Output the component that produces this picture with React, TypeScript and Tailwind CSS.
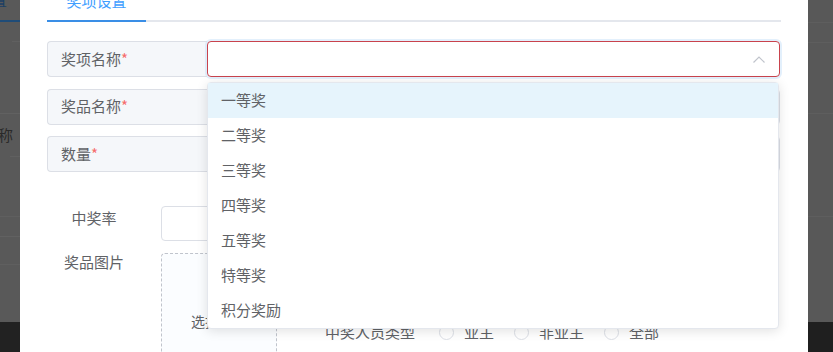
import React from "react";

const items = ["一等奖", "二等奖", "三等奖", "四等奖", "五等奖", "特等奖", "积分奖励"];

function LabeledInput({ label, active }: { label: string; active?: boolean }) {
  return (
    <div className="flex h-[36px] w-[733px]">
      <div className="flex w-[160px] shrink-0 items-center rounded-l-[4px] border border-r-0 border-[#dcdfe6] bg-[#f5f7fa] pl-[13px] text-[15px] text-[#606266]">
        {label}
        <span className="text-[#f56c6c]">*</span>
      </div>
      {active ? (
        <div className="relative flex-1 rounded-[4px] border border-[#c9434d] bg-white shadow-[0_0_0_2px_rgba(200,225,250,0.5)]">
          <svg className="absolute right-[13px] top-[13px]" width="14" height="9" viewBox="0 0 14 9" fill="none">
            <path d="M1.5 7.5 L7 2 L12.5 7.5" stroke="#c0c4cc" strokeWidth="1.2" />
          </svg>
        </div>
      ) : (
        <div className="flex-1 rounded-r-[4px] border border-[#dcdfe6] bg-white" />
      )}
    </div>
  );
}

function Radio({ label }: { label: string }) {
  return (
    <div className="flex items-center gap-[10px]">
      <span className="h-[15px] w-[15px] rounded-full border border-[#dcdfe6] bg-white" />
      <span>{label}</span>
    </div>
  );
}

export default function App() {
  return (
    <div className="relative flex h-[352px] w-[833px] overflow-hidden bg-[#575757] font-['Noto_Sans_CJK_SC','Microsoft_YaHei',sans-serif]">
      {/* left backdrop */}
      <div className="flex w-[20px] shrink-0 flex-col">
        <div className="relative h-[322px] bg-[#595959]">
          <div className="absolute left-[-8px] top-[-8px] text-[15px] leading-[16px] text-[#1c3f63]">置</div>
          <div className="absolute left-0 top-[20px] h-[2px] w-[20px] bg-[#1f4c78]" />
          <div className="absolute left-[12px] top-[41px] h-px w-[8px] bg-[#606060]" />
          <div className="absolute left-0 top-[113px] h-px w-[20px] bg-[#616161]" />
          <div className="absolute left-[-2px] top-[127px] text-[15px] leading-[16px] text-[#2a2a2a]">称</div>
          <div className="absolute left-[10px] top-[156px] h-px w-[10px] bg-[#606060]" />
          <div className="absolute left-0 top-[216px] h-px w-[20px] bg-[#5f5f5f]" />
          <div className="absolute left-0 top-[236px] h-px w-[20px] bg-[#616161]" />
          <div className="absolute left-0 top-[264px] h-px w-[20px] bg-[#5f5f5f]" />
        </div>
        <div className="flex-1 bg-[#222222]" />
      </div>

      {/* modal */}
      <div className="relative w-[788px] shrink-0 bg-white pl-[27px] text-[#606266]">
        <div className="mt-[-18px] flex h-[40px] w-[734px] border-b-2 border-[#e4e7ed]">
          <div className="mb-[-2px] flex w-[99px] items-center justify-center border-b-2 border-[#3a8ee6] text-[15px] text-[#409eff]">
            奖项设置
          </div>
        </div>

        <div className="mt-[19px] flex flex-col gap-[11.5px]">
          <LabeledInput label="奖项名称" active />
          <LabeledInput label="奖品名称" />
          <LabeledInput label="数量" />
        </div>

        <div className="mt-[34px] flex h-[35px] items-start text-[15px]">
          <div className="w-[94px] pt-[2px] text-center leading-[20px]">中奖率</div>
          <div className="ml-[20px] h-[35px] w-[300px] rounded-[4px] border border-[#dcdfe6]" />
        </div>

        <div className="mt-[12px] flex text-[15px]">
          <div className="w-[94px] mt-[-3px] text-center leading-[24px]">奖品图片</div>
          <div className="ml-[20px] flex h-[116px] w-[116px] shrink-0 items-end justify-center rounded-[4px] border border-dashed border-[#c0c4cc] bg-[#fbfdff] pb-[36px] text-[14px]">
            选择图片
          </div>
          <div className="ml-[48px] mt-[66px] flex h-[26px] items-center gap-[20px]">
            <span className="mr-[4px]">中奖人员类型</span>
            <Radio label="业主" />
            <Radio label="非业主" />
            <Radio label="全部" />
          </div>
        </div>

        {/* dropdown */}
        <div className="absolute left-[187px] top-[82px] w-[572px] rounded-[4px] border border-[#e4e7ed] bg-white shadow-[0_2px_12px_rgba(0,0,0,0.12)]">
          {items.map((it, i) => (
            <div
              key={it}
              className={
                i === 0
                  ? "flex h-[35px] items-center bg-[#e6f4fc] pl-[13px] text-[15px] text-[#606266]"
                  : "flex h-[35px] items-center pl-[13px] text-[15px] text-[#606266]"
              }
            >
              {it}
            </div>
          ))}
        </div>
      </div>

      {/* right backdrop */}
      <div className="flex flex-1 flex-col">
        <div className="relative h-[322px] bg-[#585858]">
          <div className="absolute left-0 top-[22px] h-px w-full bg-[#5e5e5e]" />
          <div className="absolute left-0 top-[42px] h-px w-full bg-[#5e5e5e]" />
          <div className="absolute left-0 top-[113px] h-px w-full bg-[#5e5e5e]" />
          <div className="absolute left-0 top-[216px] h-px w-full bg-[#5e5e5e]" />
        </div>
        <div className="flex-1 bg-[#1f1f1f]" />
      </div>
    </div>
  );
}
